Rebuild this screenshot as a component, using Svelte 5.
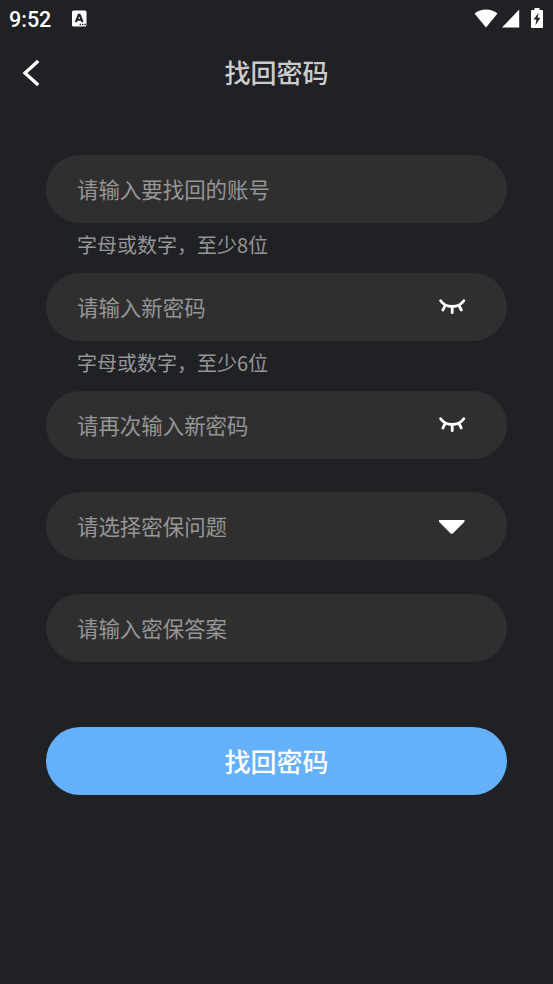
<script lang="ts">
  let account = $state('');
  let password = $state('');
  let confirmPassword = $state('');
  let answer = $state('');
  let showPassword = $state(false);
  let showConfirm = $state(false);
</script>

{#snippet closedEye()}
  <svg width="28" height="18" viewBox="0 0 28 18" fill="none" stroke="#fff" stroke-width="2.8" stroke-linecap="round">
    <path d="M2.6 2.7C8 10.4 20.4 10.4 25.8 2.7M7.1 7.5L4.9 12M14.2 8.7V14.7M21 7.5L23.3 12" />
  </svg>
{/snippet}

<div class="page">
  <div class="status-bar">
    <span class="time">9:52</span>
    <svg class="notice" width="16" height="18" viewBox="0 0 16 18">
      <rect x="0" y="0.5" width="14.5" height="16" rx="1.5" fill="#fff" />
      <path d="M3.8 12.2L6.7 4.8H7.7L10.6 12.2M4.8 9.8H9.6" fill="none" stroke="#202125" stroke-width="2.1" />
      <path d="M7.6 14.6H13.8" stroke="#202125" stroke-width="1.5" stroke-dasharray="1.4 1" />
    </svg>
    <div class="signals">
      <svg width="24" height="19" viewBox="0 0 24 19">
        <path d="M0.5 4.4C7 -0.9 17 -0.9 23.5 4.4L12 18.5Z" fill="#fff" />
      </svg>
      <svg class="cell" width="18" height="19" viewBox="0 0 18 19">
        <path d="M17.2 0.5V18.5H0Z" fill="#fff" />
      </svg>
      <svg class="battery" width="12" height="20" viewBox="0 0 12 20">
        <path d="M3.5 0H8.5V2H11Q12 2 12 3V19Q12 20 11 20H1Q0 20 0 19V3Q0 2 1 2H3.5Z" fill="#fff" />
        <path d="M7.6 4.7L2.6 11.5H5.4L4.4 17.3L9.4 9.8H6.6Z" fill="#202125" />
      </svg>
    </div>
  </div>

  <header class="nav">
    <button class="back" aria-label="返回">
      <svg width="18" height="28" viewBox="0 0 18 28" fill="none" stroke="#fff" stroke-width="3.3">
        <path d="M16.2 2L3 14L16.2 26" />
      </svg>
    </button>
    <h1>找回密码</h1>
  </header>

  <form class="form" onsubmit={(e) => e.preventDefault()}>
    <label class="field">
      <input type="text" placeholder="请输入要找回的账号" bind:value={account} />
    </label>
    <p class="hint">字母或数字，至少8位</p>

    <div class="field">
      <input type={showPassword ? 'text' : 'password'} placeholder="请输入新密码" bind:value={password} />
      <button type="button" class="icon" aria-label="显示密码" onclick={() => (showPassword = !showPassword)}>
        {@render closedEye()}
      </button>
    </div>
    <p class="hint">字母或数字，至少6位</p>

    <div class="field">
      <input type={showConfirm ? 'text' : 'password'} placeholder="请再次输入新密码" bind:value={confirmPassword} />
      <button type="button" class="icon" aria-label="显示密码" onclick={() => (showConfirm = !showConfirm)}>
        {@render closedEye()}
      </button>
    </div>

    <button type="button" class="field question">
      <span>请选择密保问题</span>
      <svg width="28" height="16" viewBox="0 0 28 16">
        <path d="M1 2H26.5V3.8L15 15.2Q13.7 16.4 12.4 15.2L1 3.8Z" fill="#fff" />
      </svg>
    </button>

    <label class="field answer">
      <input type="text" placeholder="请输入密保答案" bind:value={answer} />
    </label>

    <button type="submit" class="submit">找回密码</button>
  </form>
</div>

<style>
  :global(body) {
    background: #202125;
  }

  .page {
    min-height: 984px;
    background: #202125;
    font-family: "Noto Sans CJK SC", sans-serif;
    color: #969696;
  }

  button {
    border: none;
    background: none;
    padding: 0;
    font-family: inherit;
    cursor: pointer;
  }

  svg {
    display: block;
  }

  .status-bar {
    display: flex;
    align-items: center;
    height: 37px;
    padding: 0 9px;
    box-sizing: border-box;
  }

  .time {
    width: 63px;
    font: 500 21.5px/37px Roboto, sans-serif;
    color: #fff;
    padding-top: 1px;
  }

  .signals {
    display: flex;
    align-items: center;
    margin-left: auto;
  }

  .cell {
    margin-left: 4px;
  }

  .battery {
    margin: 0 1px 2px 11px;
  }

  .nav {
    display: grid;
    grid-template-columns: 60px 1fr 60px;
    align-items: center;
    height: 71px;
  }

  .back {
    justify-self: start;
    margin-left: 22px;
  }

  h1 {
    margin: 0;
    padding-bottom: 2px;
    text-align: center;
    font-size: 26px;
    font-weight: 500;
    line-height: 38px;
    color: #ccc;
  }

  .form {
    display: flex;
    flex-direction: column;
    padding: 47px 46px 0;
  }

  .field {
    display: flex;
    align-items: center;
    height: 68px;
    padding: 0 41px 0 31px;
    box-sizing: border-box;
    border-radius: 34px;
    background: #2f2f2f;
  }

  input {
    flex: 1;
    min-width: 0;
    height: 100%;
    padding: 0 0 2px;
    box-sizing: border-box;
    border: none;
    outline: none;
    background: transparent;
    font-family: inherit;
    font-size: 21.45px;
    color: #fff;
  }

  input::placeholder {
    color: #969696;
    opacity: 1;
  }

  .hint {
    height: 50px;
    margin: 0;
    padding-left: 31px;
    font-size: 20px;
    line-height: 44px;
    box-sizing: border-box;
  }

  .question {
    justify-content: space-between;
    margin-top: 33px;
    font-size: 21.45px;
    color: #969696;
  }

  .question span {
    padding-bottom: 1px;
  }

  .answer {
    margin-top: 34px;
  }

  .submit {
    height: 68px;
    margin-top: 65px;
    padding-bottom: 2px;
    border-radius: 34px;
    background: #65b1f9;
    color: #fff;
    font-size: 26px;
    font-weight: 500;
  }
</style>
